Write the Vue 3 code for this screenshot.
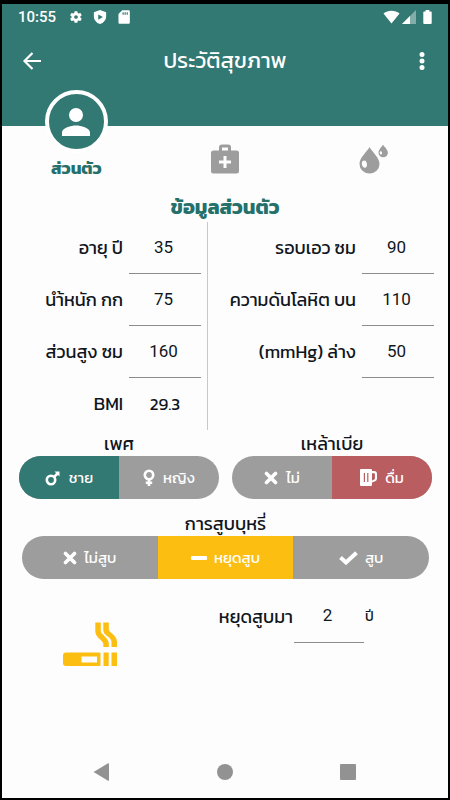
<script setup>
import { reactive, ref } from 'vue'

const personal = reactive([
  { id: 'age', label: 'อายุ ปี', value: '35' },
  { id: 'weight', label: 'นำ้หนัก กก', value: '75' },
  { id: 'height', label: 'ส่วนสูง ซม', value: '160' },
])
const vitals = reactive([
  { id: 'waist', label: 'รอบเอว ซม', value: '90' },
  { id: 'systolic', label: 'ความดันโลหิต บน', value: '110' },
  { id: 'diastolic', label: '(mmHg) ล่าง', value: '50' },
])
const sex = ref('male')
const alcohol = ref('yes')
const smoking = ref('quit')
const quitYears = ref('2')
</script>

<template>
  <div class="screen">
    <header class="top">
      <div class="status">
        <span class="time">10:55</span>
        <svg class="s-icon" viewBox="0 0 24 24"><path fill-rule="evenodd" d="M19.4 13a7.500 7.500 0 0 0 0-2l2.100-1.700a.5.5 0 0 0 .1-.6l-2-3.500a.5.5 0 0 0-.6-.2l-2.500 1a7 7 0 0 0-1.700-1l-.4-2.600a.5.5 0 0 0-.5-.4h-4a.5.5 0 0 0-.5.4L9 5a7 7 0 0 0-1.700 1l-2.500-1a.5.5 0 0 0-.6.2l-2 3.500a.5.5 0 0 0 .1.600L4.500 11a7.500 7.500 0 0 0 0 2l-2.200 1.700a.5.5 0 0 0-.1.600l2 3.500c.1.200.4.3.6.2l2.500-1a7 7 0 0 0 1.700 1l.4 2.600c0 .2.200.4.500.4h4c.300 0 .500-.2.500-.4l.400-2.600a7 7 0 0 0 1.700-1l2.500 1c.200.1.500 0 .600-.2l2-3.500a.5.5 0 0 0-.1-.6zM12 15.200a3.200 3.200 0 1 1 0-6.400 3.200 3.200 0 0 1 0 6.400z"/></svg>
        <svg class="s-icon" viewBox="0 0 24 24"><path fill-rule="evenodd" d="M12 0 1.500 4V11c0 5.800 4.200 11 10.500 13 6.300-2 10.500-7.200 10.500-13V4zM9 7.500l8 4.500-8 4.500z"/></svg>
        <svg class="s-icon" viewBox="0 0 24 24"><path fill-rule="evenodd" d="M19 .5H9L2.500 7v14.500a2 2 0 0 0 2 2H20a2 2 0 0 0 2-2v-19a2 2 0 0 0-2-2zM9.500 4h2v4h-2zm3.500 0h2v4h-2zm3.500 0h2v4h-2z"/></svg>
        <span class="spacer"></span>
        <svg class="wifi" viewBox="0 0 18 14"><path d="M9 14 .5 3.300C3 1.200 5.800.3 9 .3s6 .9 8.500 3z"/></svg>
        <svg class="s-icon signal" viewBox="0 0 14 14"><path opacity=".4" d="M14 0v14H0z"/><path d="M8 6v8H0z"/></svg>
        <svg class="battery" viewBox="0 0 9 15"><path d="M2.500 0h4v1.500H8a1 1 0 0 1 1 1V14a1 1 0 0 1-1 1H1a1 1 0 0 1-1-1V2.500a1 1 0 0 1 1-1h1.500z"/></svg>
      </div>
      <div class="bar">
        <button class="icon-btn" type="button" aria-label="กลับ">
          <svg width="24" height="24" viewBox="0 0 24 24"><path d="M21 12H4.500M12.500 4 4.500 12l8 8" fill="none" stroke="currentColor" stroke-width="2.200"/></svg>
        </button>
        <h1>ประวัติสุขภาพ</h1>
        <button class="icon-btn" type="button" aria-label="เมนู">
          <svg width="24" height="24" viewBox="0 0 24 24"><circle cx="12" cy="5.500" r="2.500"/><circle cx="12" cy="12" r="2.500"/><circle cx="12" cy="18.500" r="2.500"/></svg>
        </button>
      </div>
    </header>

    <nav class="tabs">
      <button class="tab active" type="button">
        <span class="avatar">
          <svg width="42" height="42" viewBox="0 0 24 24"><path d="M12 12a4 4 0 1 0 0-8 4 4 0 0 0 0 8zm0 2c-2.700 0-8 1.300-8 4v2h16v-2c0-2.700-5.300-4-8-4z"/></svg>
        </span>
        <span>ส่วนตัว</span>
      </button>
      <button class="tab" type="button" aria-label="การรักษา">
        <svg width="28" height="30" viewBox="0 0 28 30"><path fill-rule="evenodd" d="M8 6.500V3.500a3 3 0 0 1 3-3h6a3 3 0 0 1 3 3v3h5.500A2.500 2.500 0 0 1 28 9v18a2.500 2.500 0 0 1-2.500 2.500h-23A2.500 2.500 0 0 1 0 27V9a2.500 2.500 0 0 1 2.500-2.500zM11 3.500v3h6v-3zm1.500 8.500v4.500H8v3h4.500V24h3v-4.500H20v-3h-4.500V12z"/></svg>
      </button>
      <button class="tab" type="button" aria-label="ผลเลือด">
        <svg width="30" height="30" viewBox="0 0 30 30"><path fill-rule="evenodd" d="M10.500 3C8 8 .5 13.500.5 20a10 9.500 0 0 0 20 0C20.500 13.500 13 8 10.500 3zM5.300 16.500c1.500 0 2.700 2 2.700 4s-.8 3.300-2 3.300c-1.700 0-3.200-2-3.200-4.300 0-1.700 1-3 2.500-3z"/><path fill-rule="evenodd" d="M24 .5C22.800 3 19.500 5.500 19.500 8.800a4.700 4.500 0 0 0 9.400 0C28.900 5.500 25.200 3 24 .5zM21.800 7.300c.8 0 1.300.9 1.300 1.800s-.4 1.400-1 1.400c-.8 0-1.400-.8-1.400-1.800 0-.8.400-1.400 1.100-1.400z"/></svg>
      </button>
    </nav>

    <main>
      <h2>ข้อมูลส่วนตัว</h2>
      <div class="fields">
        <div class="col left">
          <div v-for="f in personal" :key="f.id" class="row">
            <label :for="f.id">{{ f.label }}</label>
            <input :id="f.id" v-model="f.value" inputmode="numeric">
          </div>
          <div class="row">
            <label for="bmi">BMI</label>
            <output id="bmi">29.3</output>
          </div>
        </div>
        <div class="col right">
          <div v-for="f in vitals" :key="f.id" class="row">
            <label :for="f.id">{{ f.label }}</label>
            <input :id="f.id" v-model="f.value" inputmode="numeric">
          </div>
        </div>
      </div>

      <div class="pair">
        <section>
          <h3>เพศ</h3>
          <div class="toggle">
            <button type="button" :class="{ teal: sex === 'male' }" :aria-pressed="sex === 'male'" @click="sex = 'male'">
              <svg width="16" height="16" viewBox="0 0 16 16"><g fill="none" stroke="currentColor" stroke-width="2.600"><circle cx="6" cy="10" r="4.200"/><path d="M9.200 6.800 12.500 3.500"/></g><path d="M9.500 1.500h5v5z"/></svg>
              <span>ชาย</span>
            </button>
            <button type="button" :class="{ teal: sex === 'female' }" :aria-pressed="sex === 'female'" @click="sex = 'female'">
              <svg width="12" height="18" viewBox="0 0 12 18"><g fill="none" stroke="currentColor" stroke-width="2.600"><circle cx="6" cy="6" r="4.200"/><path d="M6 10v7M2.800 13.700h6.400"/></g></svg>
              <span>หญิง</span>
            </button>
          </div>
        </section>
        <section>
          <h3>เหล้าเบีย</h3>
          <div class="toggle">
            <button type="button" :class="{ red: alcohol === 'no' }" :aria-pressed="alcohol === 'no'" @click="alcohol = 'no'">
              <svg width="14" height="14" viewBox="0 0 14 14"><path d="m2.500 2.500 9 9m0-9-9 9" stroke="currentColor" stroke-width="3.600" stroke-linecap="round"/></svg>
              <span>ไม่</span>
            </button>
            <button type="button" :class="{ red: alcohol === 'yes' }" :aria-pressed="alcohol === 'yes'" @click="alcohol = 'yes'">
              <svg width="17" height="17" viewBox="0 0 17 17"><path fill-rule="evenodd" d="M1 0h10a1 1 0 0 1 1 1v1h2a3 3 0 0 1 3 3v4.500a3 3 0 0 1-1.800 2.700L12 13.600V16a1 1 0 0 1-1 1H1a1 1 0 0 1-1-1V1a1 1 0 0 1 1-1zm11 4.200v7.200l2.300-1a1 1 0 0 0 .6-.9V5a.8.8 0 0 0-.8-.8zM3.800 4v9H5V4zM7.200 4v9h1.200V4z"/></svg>
              <span>ดื่ม</span>
            </button>
          </div>
        </section>
      </div>

      <section class="smoke">
        <h3>การสูบบุหรี่</h3>
        <div class="toggle">
          <button type="button" :class="{ amber: smoking === 'never' }" :aria-pressed="smoking === 'never'" @click="smoking = 'never'">
            <svg width="14" height="14" viewBox="0 0 14 14"><path d="m2.500 2.500 9 9m0-9-9 9" stroke="currentColor" stroke-width="3.600" stroke-linecap="round"/></svg>
            <span>ไม่สูบ</span>
          </button>
          <button type="button" :class="{ amber: smoking === 'quit' }" :aria-pressed="smoking === 'quit'" @click="smoking = 'quit'">
            <svg width="16" height="4" viewBox="0 0 16 4"><rect width="16" height="4" rx="1"/></svg>
            <span>หยุดสูบ</span>
          </button>
          <button type="button" :class="{ amber: smoking === 'yes' }" :aria-pressed="smoking === 'yes'" @click="smoking = 'yes'">
            <svg width="19" height="14" viewBox="0 0 19 14"><path d="m1.500 6.500 5.500 5L17.500 1.800" fill="none" stroke="currentColor" stroke-width="4"/></svg>
            <span>สูบ</span>
          </button>
        </div>
      </section>

      <div class="quit">
        <svg class="cig" width="54" height="45" viewBox="0 0 54 45"><path fill-rule="evenodd" d="M3 30.500h33.500a1 1 0 0 1 1 1V43a1 1 0 0 1-1 1H3a3 3 0 0 1-3-3v-7.500a3 3 0 0 1 3-3zm15.500 4v6h15.500v-6zM40.500 30.500h5.200V44h-5.200zM48.500 30.500H54V44h-5.500z"/><path d="M32.300.5h5.500V9c0 3.500 8 7 8 12.500V25h-5.500v-3c0-3.500-8-6.500-8-12.500zM40.300.5h5.500v7c0 3 8.200 5.500 8.200 12.500v5h-5.500v-5c0-5.500-8.200-6-8.200-12z"/></svg>
        <div class="quit-row">
          <label for="quit-years">หยุดสูบมา</label>
          <input id="quit-years" v-model="quitYears" inputmode="numeric">
          <span class="unit">ปี</span>
        </div>
      </div>
    </main>

    <footer class="system">
      <button type="button" aria-label="ย้อนกลับ"><svg width="18" height="18" viewBox="0 0 18 18"><path d="M16 .8v16.400a.6.6 0 0 1-.9.5L1.400 9.600a.7.7 0 0 1 0-1.200L15.100.3a.6.6 0 0 1 .9.500z"/></svg></button>
      <button type="button" aria-label="หน้าหลัก"><svg width="18" height="18" viewBox="0 0 18 18"><circle cx="9" cy="9" r="8"/></svg></button>
      <button type="button" aria-label="แอปล่าสุด"><svg width="18" height="18" viewBox="0 0 18 18"><rect x="1" y="1" width="16" height="16" rx="1"/></svg></button>
    </footer>
  </div>
</template>

<style>
body {
  background: #000;
}
</style>

<style scoped>
.screen {
  box-sizing: border-box;
  min-height: 100vh;
  display: flex;
  flex-direction: column;
  border: 2px solid #000;
  border-top-width: 4px;
  background: #fdfdfd;
  color: #10161c;
  font-family: Kanit, "Noto Sans Thai", "Noto Sans", sans-serif;
  font-size: 18px;
  line-height: 24px;
}
svg {
  display: block;
  flex: none;
  fill: currentColor;
}
button {
  border: 0;
  padding: 0;
  background: none;
  color: inherit;
  font: inherit;
  cursor: pointer;
}
h1, h2, h3 {
  margin: 0;
  font-weight: 400;
  text-align: center;
}
.top {
  background: #327873;
  color: #fff;
  padding-bottom: 38px;
}
.status {
  display: flex;
  align-items: center;
  height: 26px;
  padding: 0 16px;
}
.time {
  margin-right: 13px;
  font: 500 15px/26px Roboto, sans-serif;
}
.s-icon {
  width: 14px;
  height: 14px;
  margin-right: 10px;
}
.spacer {
  flex: 1;
}
.wifi {
  width: 17px;
  height: 14px;
  margin-right: 2px;
}
.signal {
  margin-right: 7px;
}
.battery {
  width: 9px;
  height: 14px;
}
.bar {
  display: grid;
  grid-template-columns: 1fr auto 1fr;
  align-items: center;
  height: 58px;
  padding: 4px 14px 0;
  box-sizing: border-box;
}
.bar .icon-btn:last-child {
  justify-self: end;
}
.bar .icon-btn:first-child {
  justify-self: start;
  padding-left: 4px;
}
h1 {
  font-size: 22px;
  line-height: 32px;
}
.tabs {
  display: grid;
  grid-template-columns: repeat(3, 1fr);
  align-items: end;
  height: 92px;
  margin-top: -36px;
}
.tab {
  display: flex;
  flex-direction: column;
  align-items: center;
  padding-bottom: 8px;
  color: #9d9d9d;
}
.tab.active {
  padding-bottom: 2px;
  gap: 3px;
  color: #24706a;
  font-size: 17px;
  font-weight: 700;
}
.avatar {
  display: grid;
  place-items: center;
  width: 55px;
  height: 55px;
  border: 4px solid #fff;
  border-radius: 50%;
  background: #327873;
  color: #fff;
}
h2 {
  padding: 13px 0 3px;
  color: #24706a;
  font-size: 20px;
  font-weight: 700;
}
h3 {
  font-size: 18px;
}
.fields {
  display: grid;
  grid-template-columns: 206fr 240fr;
}
.left {
  padding-right: 6px;
  border-right: 1px solid #c3c9ce;
}
.right {
  padding-right: 14px;
}
.row {
  display: flex;
  align-items: center;
  justify-content: flex-end;
  gap: 6px;
  height: 52px;
}
input, output {
  box-sizing: border-box;
  width: 72px;
  height: 52px;
  padding: 0 3px 2px 0;
  border: 0;
  border-radius: 0;
  background: none;
  color: inherit;
  font: 17px/24px Roboto, sans-serif;
  text-align: center;
}
input {
  border-bottom: 1px solid #8c8c8c;
}
output {
  padding: 14px 0 0;
  font-family: inherit;
}
.pair {
  display: grid;
  grid-template-columns: 1fr 1fr;
  gap: 13px;
  padding: 2px 16px 0 17px;
}
.toggle {
  display: flex;
  height: 43px;
  overflow: hidden;
  border-radius: 22px;
  background: #9d9d9d;
  color: #fff;
  font-size: 15px;
}
.toggle button {
  flex: 1 1 0;
  display: flex;
  align-items: center;
  justify-content: center;
  gap: 8px;
}
.toggle .teal {
  background: #327873;
}
.toggle .red {
  background: #b95d60;
}
.toggle .amber {
  background: #fdbe12;
}
.smoke {
  padding: 13px 19px 0 20px;
}
.smoke .toggle button {
  gap: 7px;
}
.quit {
  display: grid;
  grid-template-columns: 172px 1fr;
  padding-top: 11px;
}
.cig {
  margin: 32px auto 0 61px;
  color: #fdbe12;
}
.quit-row {
  display: grid;
  grid-template-columns: 119px 70px 1fr;
  gap: 1px;
  align-items: center;
  height: 53px;
}
.quit-row label {
  text-align: right;
}
.quit-row input {
  width: 70px;
}
.unit {
  font-size: 14px;
}
.system {
  display: flex;
  align-items: center;
  justify-content: center;
  gap: 105px;
  height: 52px;
  margin-top: auto;
  color: #929292;
}
</style>
